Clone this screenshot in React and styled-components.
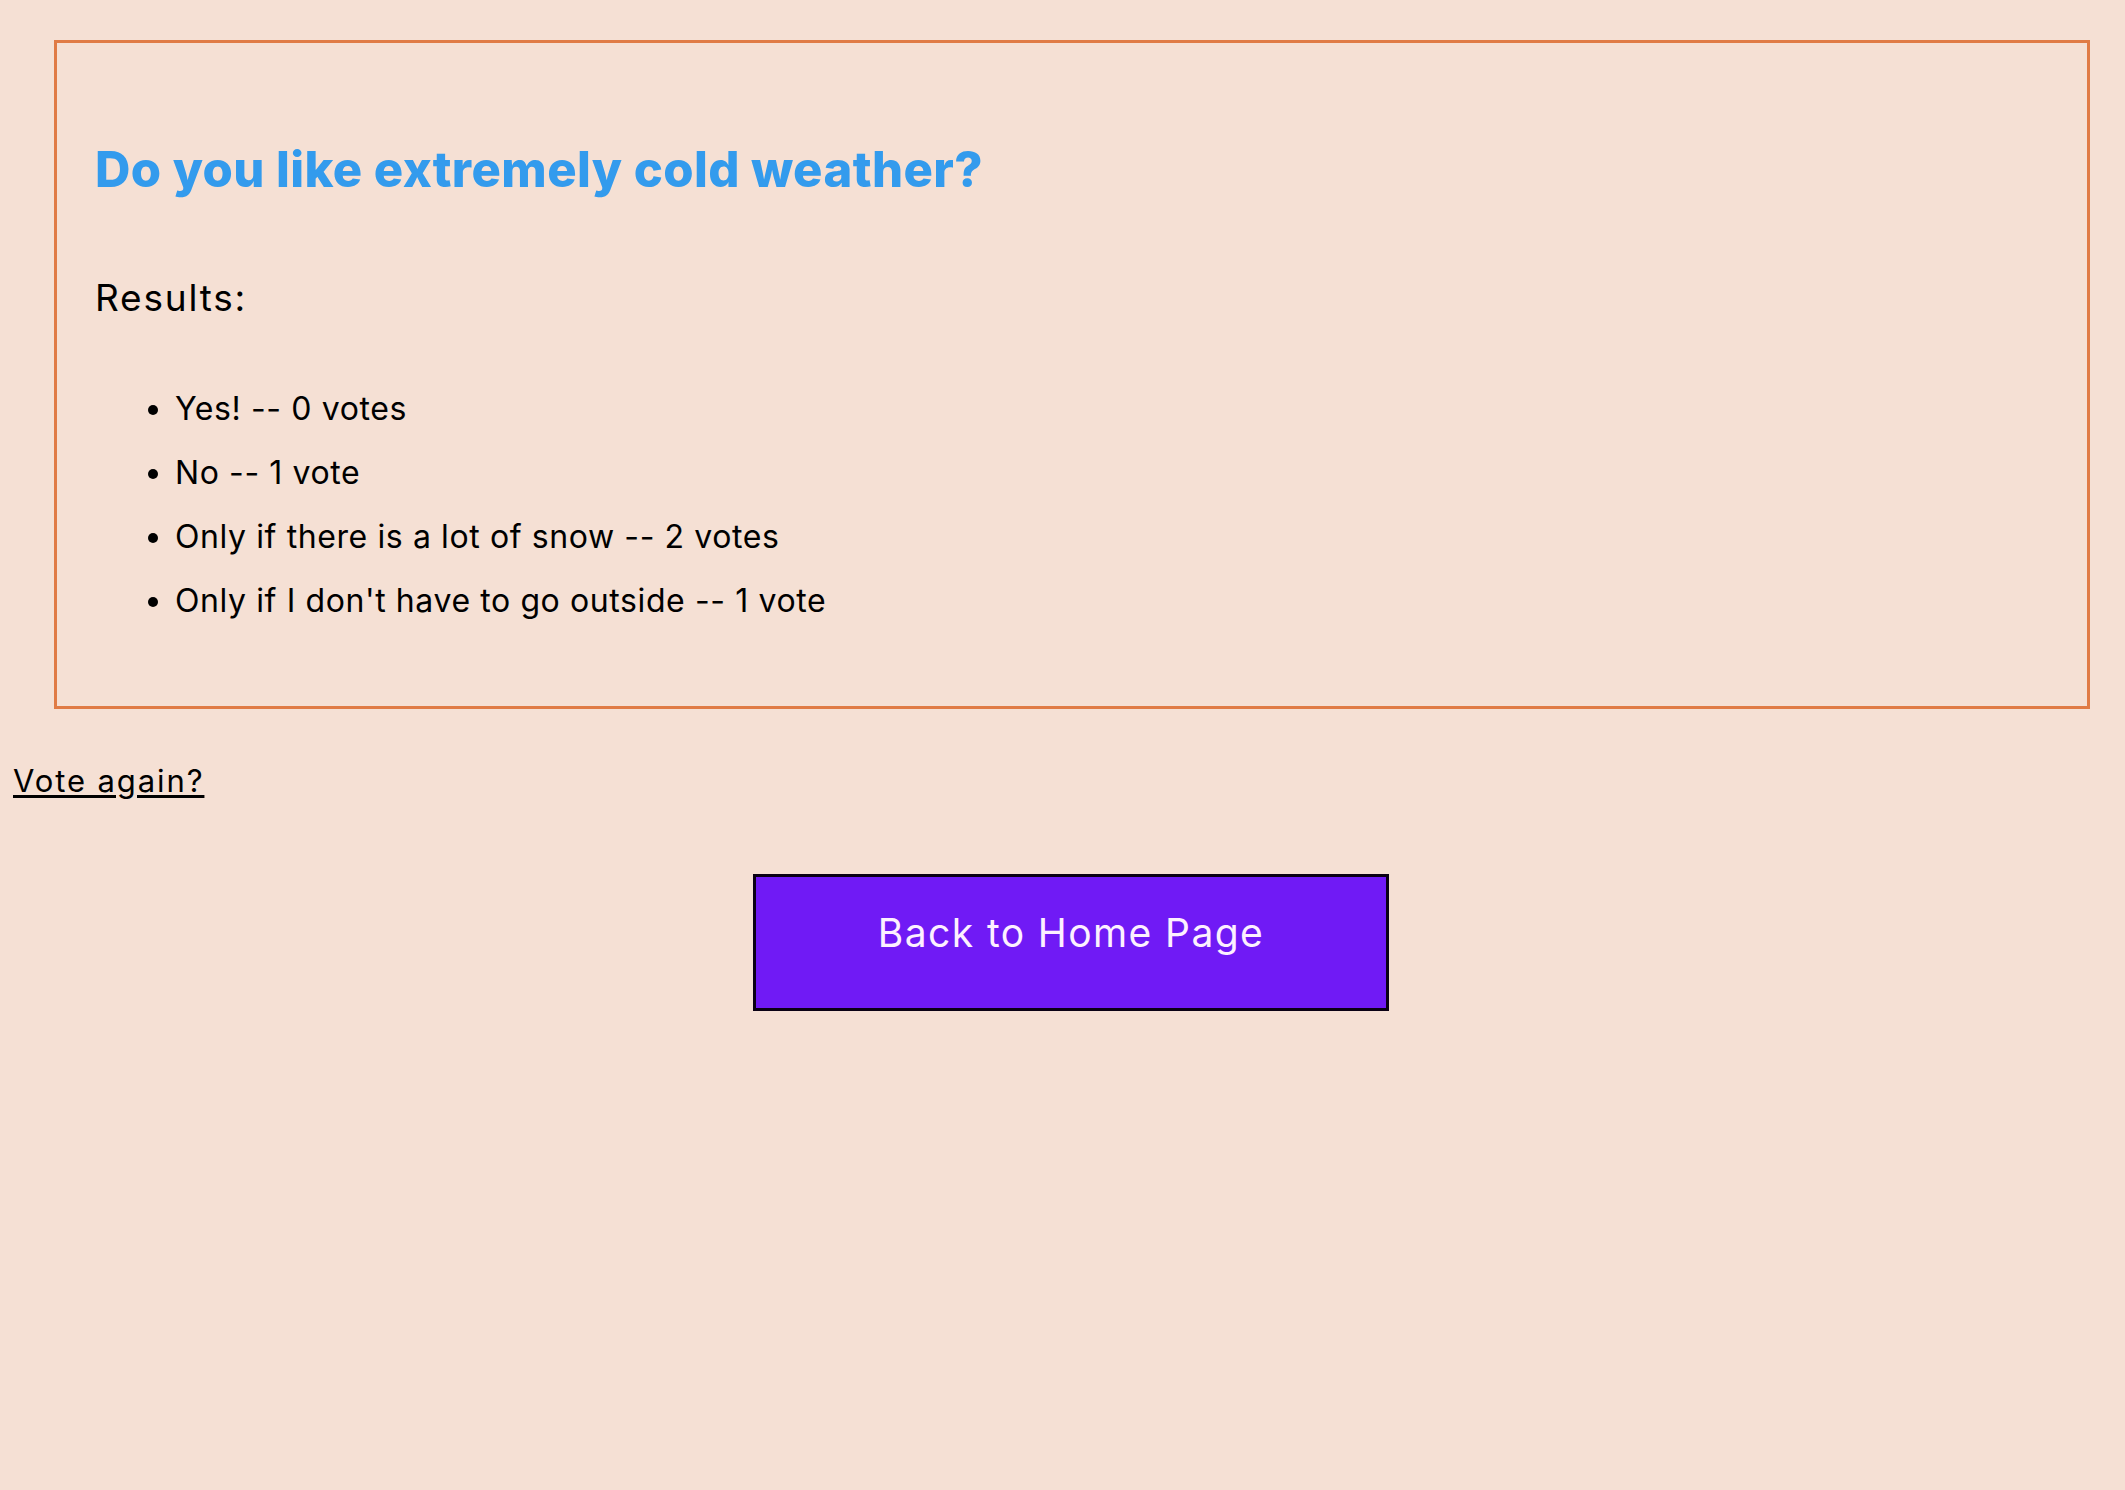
import React from "react";
import styled, { createGlobalStyle } from "styled-components";

const GlobalStyle = createGlobalStyle`
  html, body {
    margin: 0;
    padding: 0;
    background: #f5e0d4;
  }
  body {
    font-family: Inter, "Noto Sans", sans-serif;
    color: #000;
  }
`;

const Page = styled.div`
  min-height: 1490px;
  box-sizing: border-box;
  padding: 40px 35px 0 13px;
`;

const PollCard = styled.section`
  margin-left: 41px;
  border: 3px solid #e07b45;
  padding: 91px 30px 81px 38px;
`;

const Question = styled.h1`
  margin: 0;
  font-size: 49px;
  line-height: 72px;
  font-weight: 800;
  letter-spacing: 0.4px;
  color: #339bed;
`;

const ResultsTitle = styled.h2`
  margin: 65px 0 0;
  font-size: 37px;
  line-height: 54px;
  font-weight: 400;
  letter-spacing: 1.8px;
`;

const ResultList = styled.ul`
  margin: 60px 0 0;
  padding-left: 80px;
  list-style: disc;
`;

const ResultItem = styled.li`
  font-size: 32px;
  line-height: 48px;
  letter-spacing: 0.6px;
  & + & {
    margin-top: 16px;
  }
`;

const VoteAgain = styled.a`
  display: inline-block;
  margin-top: 49px;
  font-size: 31px;
  line-height: 45px;
  letter-spacing: 1.9px;
  color: #000;
  text-decoration: underline;
  text-underline-offset: 3px;
  cursor: pointer;
`;

const ButtonRow = styled.div`
  display: flex;
  padding-left: 740px;
  margin-top: 71px;
`;

const HomeButton = styled.button`
  width: 636px;
  height: 137px;
  box-sizing: border-box;
  border: 3px solid #0a0014;
  background: #701af5;
  color: #fdf0ff;
  font-family: inherit;
  font-size: 39px;
  letter-spacing: 1.4px;
  padding: 0 0 20px;
  cursor: pointer;
`;

const results = [
  { answer: "Yes!", votes: 0 },
  { answer: "No", votes: 1 },
  { answer: "Only if there is a lot of snow", votes: 2 },
  { answer: "Only if I don't have to go outside", votes: 1 },
];

export default function App() {
  return (
    <>
      <GlobalStyle />
      <Page>
        <PollCard>
          <Question>Do you like extremely cold weather?</Question>
          <ResultsTitle>Results:</ResultsTitle>
          <ResultList>
            {results.map((r) => (
              <ResultItem key={r.answer}>
                {r.answer} -- {r.votes} {r.votes === 1 ? "vote" : "votes"}
              </ResultItem>
            ))}
          </ResultList>
        </PollCard>
        <VoteAgain>Vote again?</VoteAgain>
        <ButtonRow>
          <HomeButton>Back to Home Page</HomeButton>
        </ButtonRow>
      </Page>
    </>
  );
}
